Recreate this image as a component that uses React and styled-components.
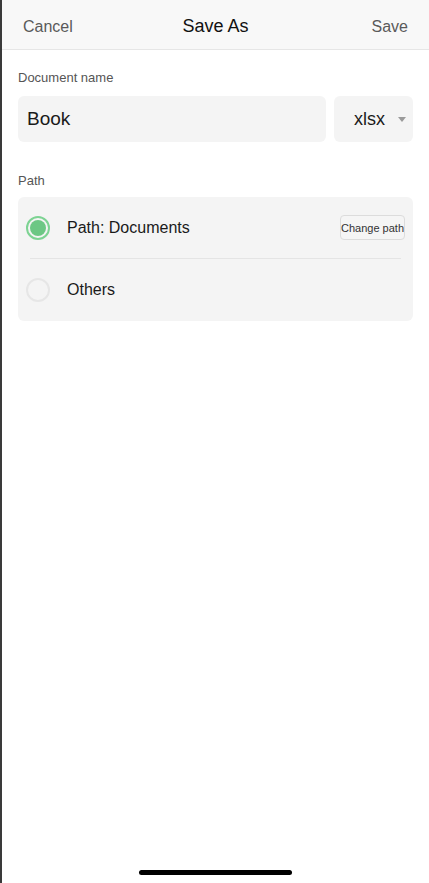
import React from "react";
import styled, { createGlobalStyle } from "styled-components";

const Global = createGlobalStyle`
  html, body { margin: 0; padding: 0; height: 100%; background: #fff; }
  body { font-family: "Liberation Sans", Arial, sans-serif; }
  #root { height: 100%; }
`;

const Screen = styled.div`
  box-sizing: border-box;
  height: 883px;
  border-left: 2px solid #3a3a3a;
  display: flex;
  flex-direction: column;
  background: #fff;
`;

const Header = styled.header`
  height: 50px;
  box-sizing: border-box;
  background: #f8f8f8;
  border-bottom: 1px solid #e6e6e6;
  display: grid;
  grid-template-columns: 1fr auto 1fr;
  align-items: center;
  padding: 4px 21px 0 21px;
`;

const NavButton = styled.span`
  font-size: 16px;
  color: #5a5a5a;
  justify-self: ${(p) => (p.$right ? "end" : "start")};
`;

const Title = styled.span`
  font-size: 18px;
  color: #111;
`;

const Body = styled.main`
  padding: 0 16px 0 16px;
  display: flex;
  flex-direction: column;
`;

const Label = styled.div`
  font-size: 13px;
  color: #555;
  margin-top: ${(p) => p.$top}px;
  line-height: 16px;
`;

const NameRow = styled.div`
  display: flex;
  gap: 8px;
  margin-top: 10px;
`;

const Field = styled.div`
  flex: 1;
  height: 46px;
  background: #f4f4f4;
  border-radius: 6px;
  display: flex;
  align-items: center;
  padding-left: 9px;
  font-size: 19px;
  color: #1a1a1a;
`;

const Select = styled.div`
  width: 79px;
  height: 46px;
  box-sizing: border-box;
  background: #f4f4f4;
  border-radius: 6px;
  display: flex;
  align-items: center;
  padding-left: 20px;
  gap: 13px;
  font-size: 18px;
  color: #1a1a1a;
`;

const Caret = styled.span`
  width: 0;
  height: 0;
  border-left: 4px solid transparent;
  border-right: 4px solid transparent;
  border-top: 5px solid #9a9a9a;
  margin-top: 1px;
`;

const Card = styled.div`
  margin-top: 8px;
  background: #f4f4f4;
  border-radius: 6px;
  padding: 0 12px 0 8px;
  height: 124px;
  box-sizing: border-box;
  display: flex;
  flex-direction: column;
`;

const Row = styled.div`
  height: ${(p) => p.$h}px;
  display: flex;
  align-items: center;
  gap: 16px;
`;

const Radio = styled.span`
  width: 24px;
  height: 24px;
  box-sizing: border-box;
  border-radius: 50%;
  border: 2px solid ${(p) => (p.$checked ? "#7dd393" : "#e6e6e6")};
  display: flex;
  align-items: center;
  justify-content: center;
  flex-shrink: 0;
  &::after {
    content: "";
    width: 16px;
    height: 16px;
    border-radius: 50%;
    background: ${(p) => (p.$checked ? "#6cc784" : "transparent")};
  }
`;

const RowText = styled.span`
  font-size: 16px;
  color: #1a1a1a;
  flex: 1;
  margin-left: 1px;
`;

const SmallButton = styled.button`
  width: 65px;
  height: 25px;
  box-sizing: border-box;
  border: 1px solid #dcdcdc;
  border-radius: 4px;
  background: #f5f5f5;
  font-family: "Liberation Sans", Arial, sans-serif;
  font-size: 11px;
  color: #333;
  padding: 0;
  margin-right: -4px;
  white-space: nowrap;
  overflow: hidden;
`;

const Divider = styled.div`
  height: 1px;
  background: #e4e4e4;
  margin: 0 0 0 4px;
`;

const Spacer = styled.div`
  flex: 1;
`;

const HomeBar = styled.div`
  align-self: center;
  width: 153px;
  height: 5px;
  border-radius: 3px;
  background: #000;
  margin-bottom: 8px;
`;

export default function App() {
  return (
    <>
      <Global />
      <Screen>
        <Header>
          <NavButton>Cancel</NavButton>
          <Title>Save As</Title>
          <NavButton $right>Save</NavButton>
        </Header>
        <Body>
          <Label $top={20}>Document name</Label>
          <NameRow>
            <Field>Book</Field>
            <Select>
              xlsx
              <Caret />
            </Select>
          </NameRow>
          <Label $top={31}>Path</Label>
          <Card>
            <Row $h={61}>
              <Radio $checked />
              <RowText>Path: Documents</RowText>
              <SmallButton>Change path</SmallButton>
            </Row>
            <Divider />
            <Row $h={62}>
              <Radio />
              <RowText>Others</RowText>
            </Row>
          </Card>
        </Body>
        <Spacer />
        <HomeBar />
      </Screen>
    </>
  );
}
